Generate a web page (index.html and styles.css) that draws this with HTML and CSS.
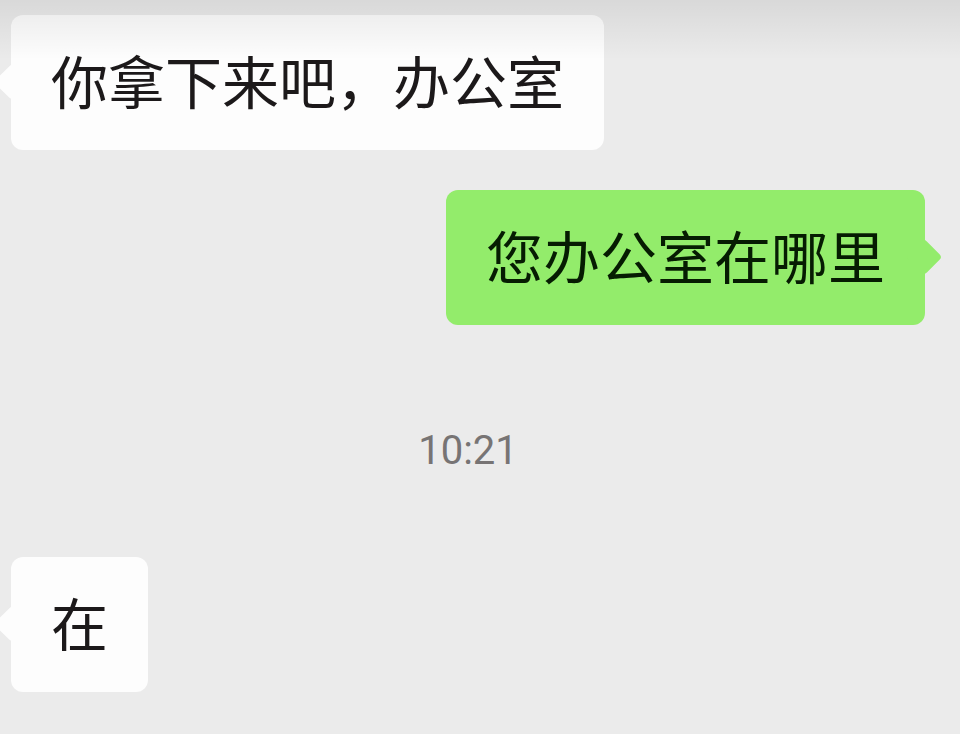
FILE: index.html
```html
<!DOCTYPE html>
<html lang="zh-CN">
<head>
<meta charset="utf-8">
<meta name="viewport" content="width=device-width, initial-scale=1">
<title>聊天</title>
<link rel="stylesheet" href="styles.css">
</head>
<body>
<main class="chat">
  <div class="row"><p class="bubble received">你拿下来吧，办公室</p></div>
  <div class="row mine"><p class="bubble sent">您办公室在哪里</p></div>
  <time class="stamp" datetime="10:21">10:21</time>
  <div class="row"><p class="bubble received">在</p></div>
</main>
</body>
</html>
```

FILE: styles.css
```css
* { box-sizing: border-box; }
body {
  margin: 0;
  min-height: 100vh;
  background: #ebebeb;
  font-family: "Noto Sans CJK SC", sans-serif;
  color: #1c191a;
}
.chat {
  position: relative;
  display: flex;
  flex-direction: column;
  padding: 15px 35px 40px 11px;
}
/* shade under the top edge of the conversation */
.chat::after {
  content: "";
  position: absolute;
  inset: 0 0 auto;
  height: 60px;
  background: linear-gradient(rgba(0, 0, 0, 0.08), rgba(0, 0, 0, 0.06) 25%, transparent);
  pointer-events: none;
}
.row { display: flex; }
.mine { justify-content: flex-end; margin-top: 40px; }
.bubble {
  position: relative;
  margin: 0;
  padding: 26px 40px 33px;
  border-radius: 12px;
  font-size: 57px;
  line-height: 76px;
}
.received { background: #fdfdfd; }
.sent { background: #93ec6b; color: #061c02; }
.bubble::before {
  content: "";
  position: absolute;
  top: 54px;
  width: 26px;
  height: 26px;
  border-radius: 4px;
  background: inherit;
  transform: rotate(45deg);
}
.received::before { left: -12px; }
.sent::before { right: -12px; }
.stamp {
  align-self: center;
  margin: 98px 0 78px;
  color: #777474;
  font-family: Roboto, "Noto Sans", sans-serif;
  font-size: 40px;
  line-height: 56px;
}
```
